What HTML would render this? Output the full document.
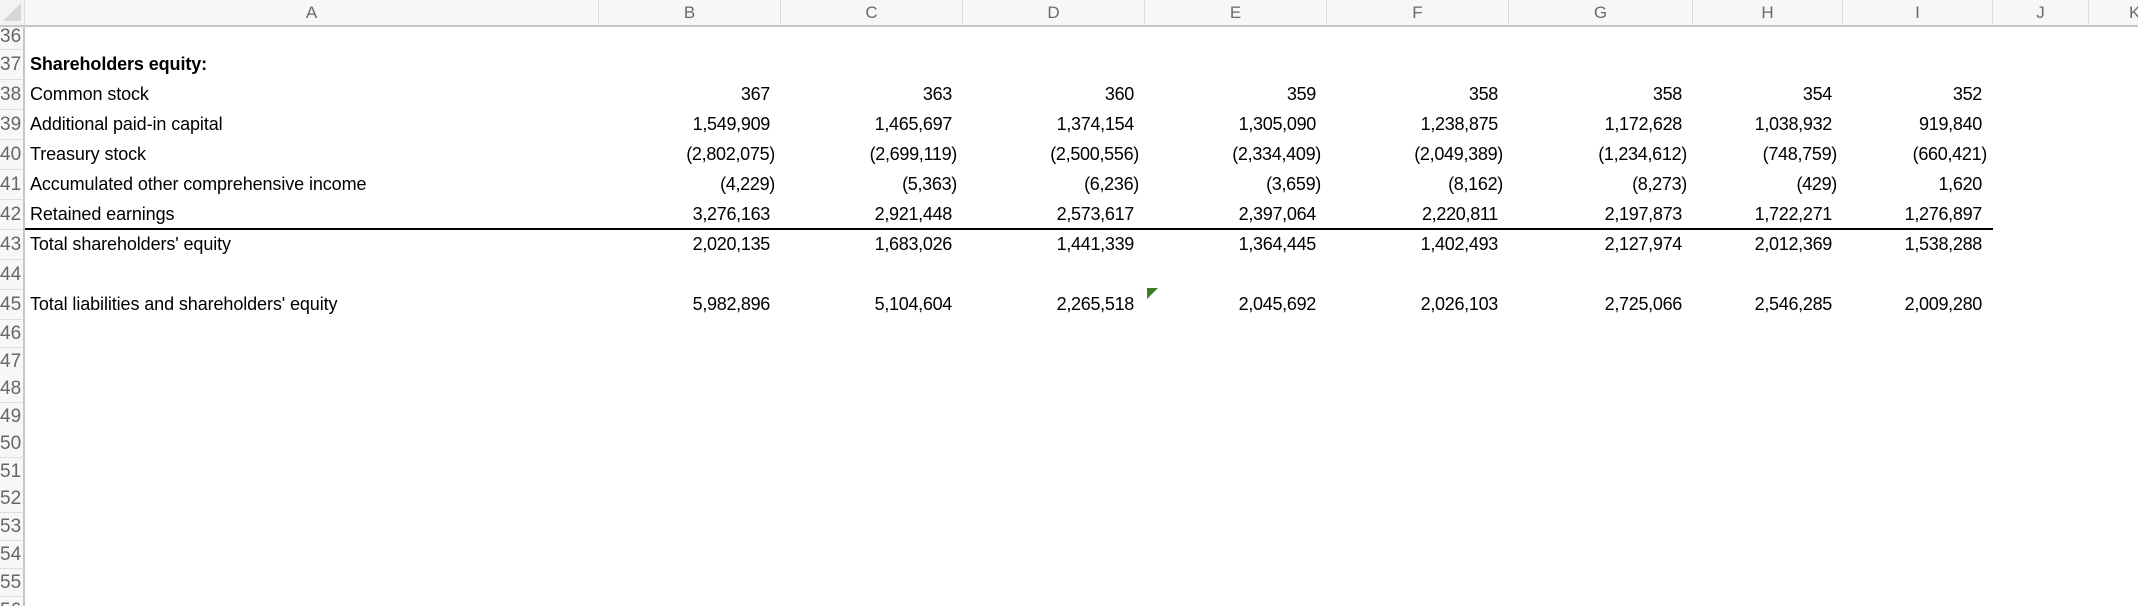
<!DOCTYPE html>
<html style="width:2138px;height:606px;overflow:hidden"><head><meta charset="utf-8"><style>
*{margin:0;padding:0;box-sizing:border-box}
body{width:2138px;height:606px;overflow:hidden;background:#fff;font-family:"Liberation Sans",sans-serif;position:relative}
.hdr{position:absolute;top:0;height:27px;background:#f7f7f7;border-bottom:2px solid #c6c6c6;border-right:1px solid #dcdcdc;color:#6a6a6a;font-size:17px;text-align:center;line-height:26px}
.rh{position:absolute;left:0;width:25px;background:#f7f7f7;border-right:2px solid #c6c6c6;border-bottom:1px solid #dedede;color:#666;font-size:19px;text-align:right;padding-right:3px;overflow:hidden;white-space:nowrap}
.t{position:absolute;font-size:18px;color:#000;white-space:nowrap;letter-spacing:-0.1px}
.n{position:absolute;font-size:18px;color:#000;white-space:nowrap;text-align:right;letter-spacing:-0.3px}
</style></head><body>
<div class="hdr" style="left:0;width:25px;background:#f3f3f3"><div style="position:absolute;left:3px;top:3px;width:0;height:0;border-left:18px solid transparent;border-bottom:18px solid #d6d6d6"></div></div>
<div class="hdr" style="left:25px;width:574px">A</div>
<div class="hdr" style="left:599px;width:182px">B</div>
<div class="hdr" style="left:781px;width:182px">C</div>
<div class="hdr" style="left:963px;width:182px">D</div>
<div class="hdr" style="left:1145px;width:182px">E</div>
<div class="hdr" style="left:1327px;width:182px">F</div>
<div class="hdr" style="left:1509px;width:184px">G</div>
<div class="hdr" style="left:1693px;width:150px">H</div>
<div class="hdr" style="left:1843px;width:150px">I</div>
<div class="hdr" style="left:1993px;width:96px">J</div>
<div class="hdr" style="left:2089px;width:60px;text-align:left;padding-left:40px">K</div>

<div class="rh" style="top:27px;height:23px;line-height:20px">36</div>
<div class="rh" style="top:50px;height:30px;line-height:30px">37</div>
<div class="rh" style="top:80px;height:30px;line-height:30px">38</div>
<div class="rh" style="top:110px;height:30px;line-height:30px">39</div>
<div class="rh" style="top:140px;height:30px;line-height:30px">40</div>
<div class="rh" style="top:170px;height:30px;line-height:30px">41</div>
<div class="rh" style="top:200px;height:30px;line-height:30px">42</div>
<div class="rh" style="top:230px;height:30px;line-height:30px">43</div>
<div class="rh" style="top:260px;height:30px;line-height:30px">44</div>
<div class="rh" style="top:290px;height:30px;line-height:30px">45</div>
<div class="rh" style="top:320px;height:28px;line-height:28px">46</div>
<div class="rh" style="top:348px;height:28px;line-height:28px">47</div>
<div class="rh" style="top:375px;height:28px;line-height:28px">48</div>
<div class="rh" style="top:403px;height:28px;line-height:28px">49</div>
<div class="rh" style="top:430px;height:28px;line-height:28px">50</div>
<div class="rh" style="top:458px;height:28px;line-height:28px">51</div>
<div class="rh" style="top:485px;height:28px;line-height:28px">52</div>
<div class="rh" style="top:513px;height:28px;line-height:28px">53</div>
<div class="rh" style="top:541px;height:28px;line-height:28px">54</div>
<div class="rh" style="top:569px;height:28px;line-height:28px">55</div>
<div class="rh" style="top:597px;height:28px;line-height:28px">56</div>

<div class="t" style="left:30px;top:54px;font-weight:bold">Shareholders equity:</div>
<div class="t" style="left:30px;top:84px">Common stock</div>
<div class="t" style="left:30px;top:114px">Additional paid-in capital</div>
<div class="t" style="left:30px;top:144px">Treasury stock</div>
<div class="t" style="left:30px;top:174px">Accumulated other comprehensive income</div>
<div class="t" style="left:30px;top:204px">Retained earnings</div>
<div class="t" style="left:30px;top:234px">Total shareholders' equity</div>
<div class="t" style="left:30px;top:294px">Total liabilities and shareholders' equity</div>

<div style="position:absolute;left:25px;top:228px;width:1968px;height:2px;background:#000"></div>
<div style="position:absolute;left:1147px;top:288px;width:0;height:0;border-top:11px solid #3a7d22;border-right:11px solid transparent"></div>

<div id="nums"></div>
<script>
var cols=[[599,781],[781,963],[963,1145],[1145,1327],[1327,1509],[1509,1693],[1693,1843],[1843,1993]];
var rows=[
[84,["367","363","360","359","358","358","354","352"]],
[114,["1,549,909","1,465,697","1,374,154","1,305,090","1,238,875","1,172,628","1,038,932","919,840"]],
[144,["(2,802,075)","(2,699,119)","(2,500,556)","(2,334,409)","(2,049,389)","(1,234,612)","(748,759)","(660,421)"]],
[174,["(4,229)","(5,363)","(6,236)","(3,659)","(8,162)","(8,273)","(429)","1,620"]],
[204,["3,276,163","2,921,448","2,573,617","2,397,064","2,220,811","2,197,873","1,722,271","1,276,897"]],
[234,["2,020,135","1,683,026","1,441,339","1,364,445","1,402,493","2,127,974","2,012,369","1,538,288"]],
[294,["5,982,896","5,104,604","2,265,518","2,045,692","2,026,103","2,725,066","2,546,285","2,009,280"]]];
var h="";
rows.forEach(function(r){r[1].forEach(function(v,i){var neg=v[0]=="(";var right=2138-cols[i][1]+(neg?6:11);
h+='<div class="n" style="right:'+right+'px;top:'+r[0]+'px">'+v+'</div>';});});
document.getElementById("nums").innerHTML=h;
</script>
</body></html>
